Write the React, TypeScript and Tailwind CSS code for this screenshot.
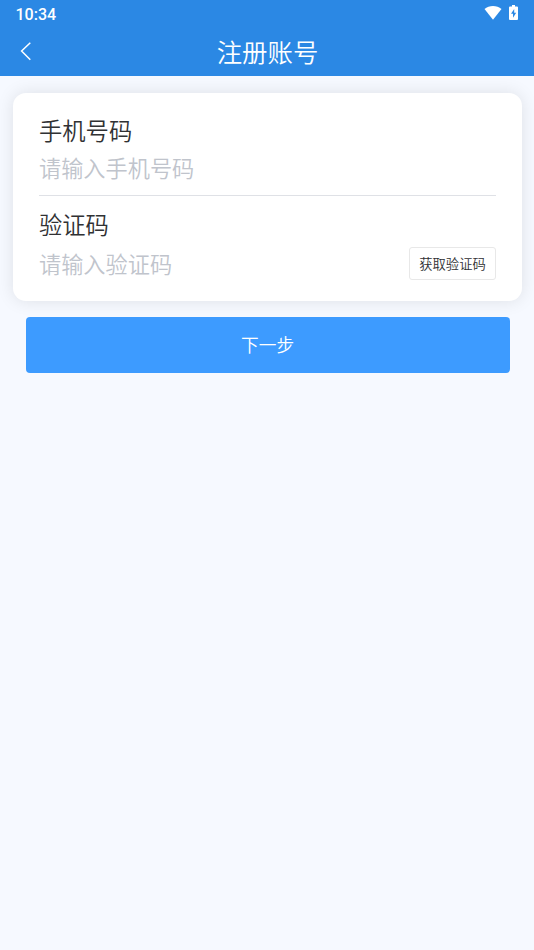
export default function App() {
  return (
    <div className="flex h-[950px] w-[534px] flex-col overflow-hidden bg-[#f6f9ff] font-['Noto_Sans_CJK_SC',sans-serif] font-[350] text-[#303133]">
      <header className="h-[75.600px] bg-[#2b88e4] text-white">
        <div className="flex h-[27px] items-center justify-between pl-[15.500px] pr-4 pt-px font-['Roboto',sans-serif] text-[16px] font-medium leading-7">
          <span className="pt-px">10:34</span>
          <div className="flex items-center gap-[7px] pb-[3px]">
            <svg width="18" height="14" viewBox="0 0 18 14" fill="currentColor"><path d="M0.500 3C5-1 13-1 17.500 3L9 13.700Z" /></svg>
            <svg width="9" height="16" viewBox="0 0 9 16"><path d="M3 0h3v1.500h2q1 0 1 1V14q0 1-1 1H1q-1 0-1-1V2.500q0-1 1-1h2Z" fill="currentColor" /><path d="M5.200 4 2 8.700h2v4l3.200-5h-2Z" fill="#2b88e4" /></svg>
          </div>
        </div>
        <div className="grid h-12 grid-cols-[60px_1fr_60px] items-center">
          <svg className="ml-5" width="12" height="20" viewBox="0 0 12 20" fill="none" stroke="currentColor" strokeWidth="1.5"><path d="M10.300 1.700 1.600 10l8.700 8.700" /></svg>
          <h1 className="pl-px text-center text-[25.400px] font-[350] leading-[48px]">注册账号</h1>
        </div>
      </header>
      <main>
        <section className="ml-[13px] mr-[12.500px] mt-[17px] h-[208px] rounded-[13px] bg-white pl-[26px] pr-[25.500px] pt-[20px] shadow-[0_0_17px_rgba(0,0,0,0.1)]">
          <div className="h-[83px] border-b border-[#dfe1e6]">
            <label className="block text-[23.300px] leading-[34px]">手机号码</label>
            <div className="pt-[3px] text-[22.200px] leading-[34px] text-[#c0c4cc]">请输入手机号码</div>
          </div>
          <label className="block pt-[11px] text-[23.300px] leading-[34px]">验证码</label>
          <div className="flex items-center justify-between pt-[5px]">
            <span className="text-[22.200px] leading-[34px] text-[#c0c4cc]">请输入验证码</span>
            <button className="mt-px h-[33px] w-[87px] rounded-[3px] border border-[#e8e8e8] text-[13.300px] leading-[31px]">获取验证码</button>
          </div>
        </section>
        <button className="ml-[25.600px] mt-[16.600px] block h-[55.600px] w-[484px] rounded-[4px] bg-[#3d9bff] pb-[2px] text-[17.700px] text-white">下一步</button>
      </main>
    </div>
  );
}
